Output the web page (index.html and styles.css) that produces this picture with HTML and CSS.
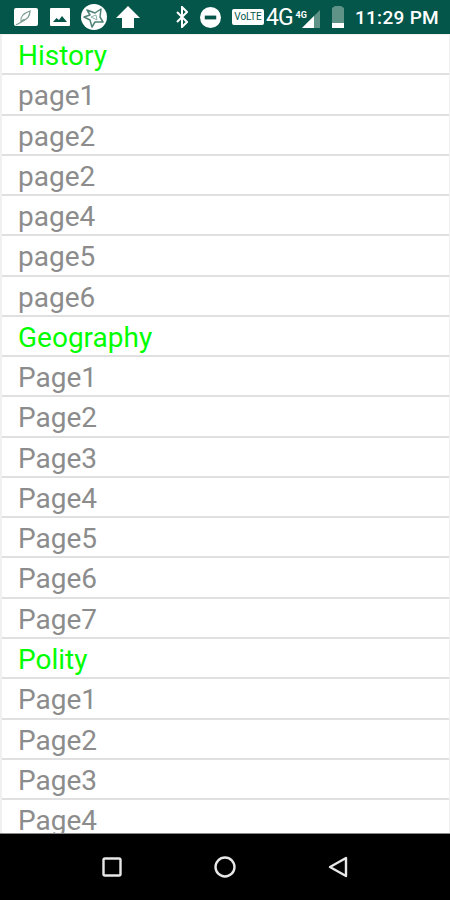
FILE: index.html
```html
<!DOCTYPE html>
<html lang="en">
<head>
<meta charset="utf-8">
<title>Topics</title>
<link rel="stylesheet" href="styles.css">
</head>
<body>
<div class="phone">
  <header class="status">
    <div class="status-left">
      <svg class="ic" width="24" height="18" viewBox="0 0 24 18"><rect width="24" height="18" rx="2" fill="#fff"/><path d="M7 14c-1-5 3-9 9-11 0 5-3 9-7 9l-2 2zM2 17l9-5" fill="none" stroke="#7f9f96" stroke-width="1.300"/></svg>
      <svg class="ic ic-pic" width="20" height="18" viewBox="0 0 20 18"><rect width="20" height="18" rx="1" fill="#fff"/><path d="M3 14l3.500-4 2.500 2 3-4 5 6z" fill="#05564a"/></svg>
      <svg class="ic ic-star" width="26" height="26" viewBox="0 0 26 26"><circle cx="13" cy="13" r="13" fill="#fff"/><path d="M6 6l8 3 6-4-1 8 3 5-8 0-3 5-2-7-6-3 6-2z" fill="none" stroke="#4f8277" stroke-width="1.500" stroke-linejoin="round"/><path d="M10 13l5-2 1 5z" fill="none" stroke="#8fb3aa"/></svg>
      <svg class="ic ic-up" width="24" height="24" viewBox="0 0 24 24"><path d="M12 1l12 12h-6v10H6V13H0z" fill="#fff"/></svg>
      <svg class="ic ic-bt" width="12" height="22" viewBox="0 0 12 22"><path d="M1 6l10 10-5 5V1l5 5L1 16" fill="none" stroke="#fff" stroke-width="2"/></svg>
      <svg class="ic ic-dnd" width="21" height="21" viewBox="0 0 22 22"><circle cx="11" cy="11" r="11" fill="#fff"/><rect x="5" y="9" width="12" height="4" fill="#05564a"/></svg>
    </div>
    <div class="status-right">
      <span class="volte">VoLTE</span>
      <span class="net">4G</span>
      <span class="net-small">4G</span>
      <svg class="ic ic-signal" width="20" height="20" viewBox="0 0 20 20"><path d="M19 1v18H1z" fill="#5f9388"/><path d="M13 7v12H1z" fill="#fff"/></svg>
      <svg class="ic ic-batt" width="14" height="24" viewBox="0 0 14 24"><path d="M4 1h6l3 2v20H1V3z" fill="#5f9388"/><rect x="1" y="18" width="12" height="5" fill="#fff"/></svg>
      <span class="clock">11:29 PM</span>
    </div>
  </header>
  <main class="list">
    <div class="row head">History</div>
    <div class="row">page1</div>
    <div class="row">page2</div>
    <div class="row">page2</div>
    <div class="row">page4</div>
    <div class="row">page5</div>
    <div class="row">page6</div>
    <div class="row head">Geography</div>
    <div class="row">Page1</div>
    <div class="row">Page2</div>
    <div class="row">Page3</div>
    <div class="row">Page4</div>
    <div class="row">Page5</div>
    <div class="row">Page6</div>
    <div class="row">Page7</div>
    <div class="row head">Polity</div>
    <div class="row">Page1</div>
    <div class="row">Page2</div>
    <div class="row">Page3</div>
    <div class="row">Page4</div>
  </main>
  <nav class="navbar">
    <svg width="20" height="20" viewBox="0 0 20 20"><rect x="1.500" y="1.500" width="17" height="17" rx="1.500" fill="none" stroke="#e8e8e8" stroke-width="2.400"/></svg>
    <svg width="22" height="22" viewBox="0 0 22 22"><circle cx="11" cy="11" r="9.500" fill="none" stroke="#e8e8e8" stroke-width="2.400"/></svg>
    <svg width="20" height="22" viewBox="0 0 20 22"><path d="M18 2v18L2 11z" fill="none" stroke="#e8e8e8" stroke-width="2.400" stroke-linejoin="round"/></svg>
  </nav>
</div>
</body>
</html>
```
FILE: styles.css
```css
html, body {
  margin: 0;
  padding: 0;
  background: #fff;
}
.phone {
  width: 450px;
  height: 900px;
  display: flex;
  flex-direction: column;
  overflow: hidden;
  font-family: Roboto, "Liberation Sans", sans-serif;
}
.status {
  height: 34px;
  flex: none;
  background: #05564a;
  display: flex;
  align-items: center;
  justify-content: space-between;
  color: #fff;
  padding: 0 11px 0 14px;
  box-sizing: border-box;
}
.status-left, .status-right {
  display: flex;
  align-items: center;
}
.ic { display: block; flex: none; }
.ic-pic { margin-left: 12px; }
.ic-star { margin-left: 11px; }
.ic-up { margin-left: 9px; }
.ic-bt { margin-left: 36px; }
.ic-dnd { margin-left: 12px; }
.volte {
  width: 32px;
  height: 16px;
  background: #fff;
  color: #05564a;
  font-size: 10px;
  line-height: 16px;
  text-align: center;
  border-radius: 2px;
  overflow: hidden;
  white-space: nowrap;
}
.net {
  font-size: 23px;
  margin-left: 2px;
  letter-spacing: -1px;
}
.net-small {
  font-size: 9px;
  font-weight: 700;
  align-self: flex-start;
  margin: 6px 0 0 3px;
}
.ic-signal { margin-left: -6px; margin-top: 3px; }
.ic-batt { margin-left: 10px; }
.clock {
  font-size: 19px;
  font-weight: 500;
  margin-left: 10px;
  letter-spacing: .3px;
}
.list {
  flex: 1;
  min-height: 0;
  overflow: hidden;
  background: #f0f0f0;
  padding: 1px 1px 0 2px;
}
.row {
  height: 38.28px;
  background: #fff;
  border-bottom: 2px solid #e0e0e0;
  padding-left: 16px;
  font-size: 28px;
  line-height: 42px;
  color: #8c8c8c;
}
.head { color: #00ff00; }
.navbar {
  height: 67px;
  flex: none;
  background: #000;
  border-top: 1px solid #888;
  box-sizing: border-box;
  display: flex;
  align-items: center;
  padding-left: 102px;
  gap: 92px;
}
```
